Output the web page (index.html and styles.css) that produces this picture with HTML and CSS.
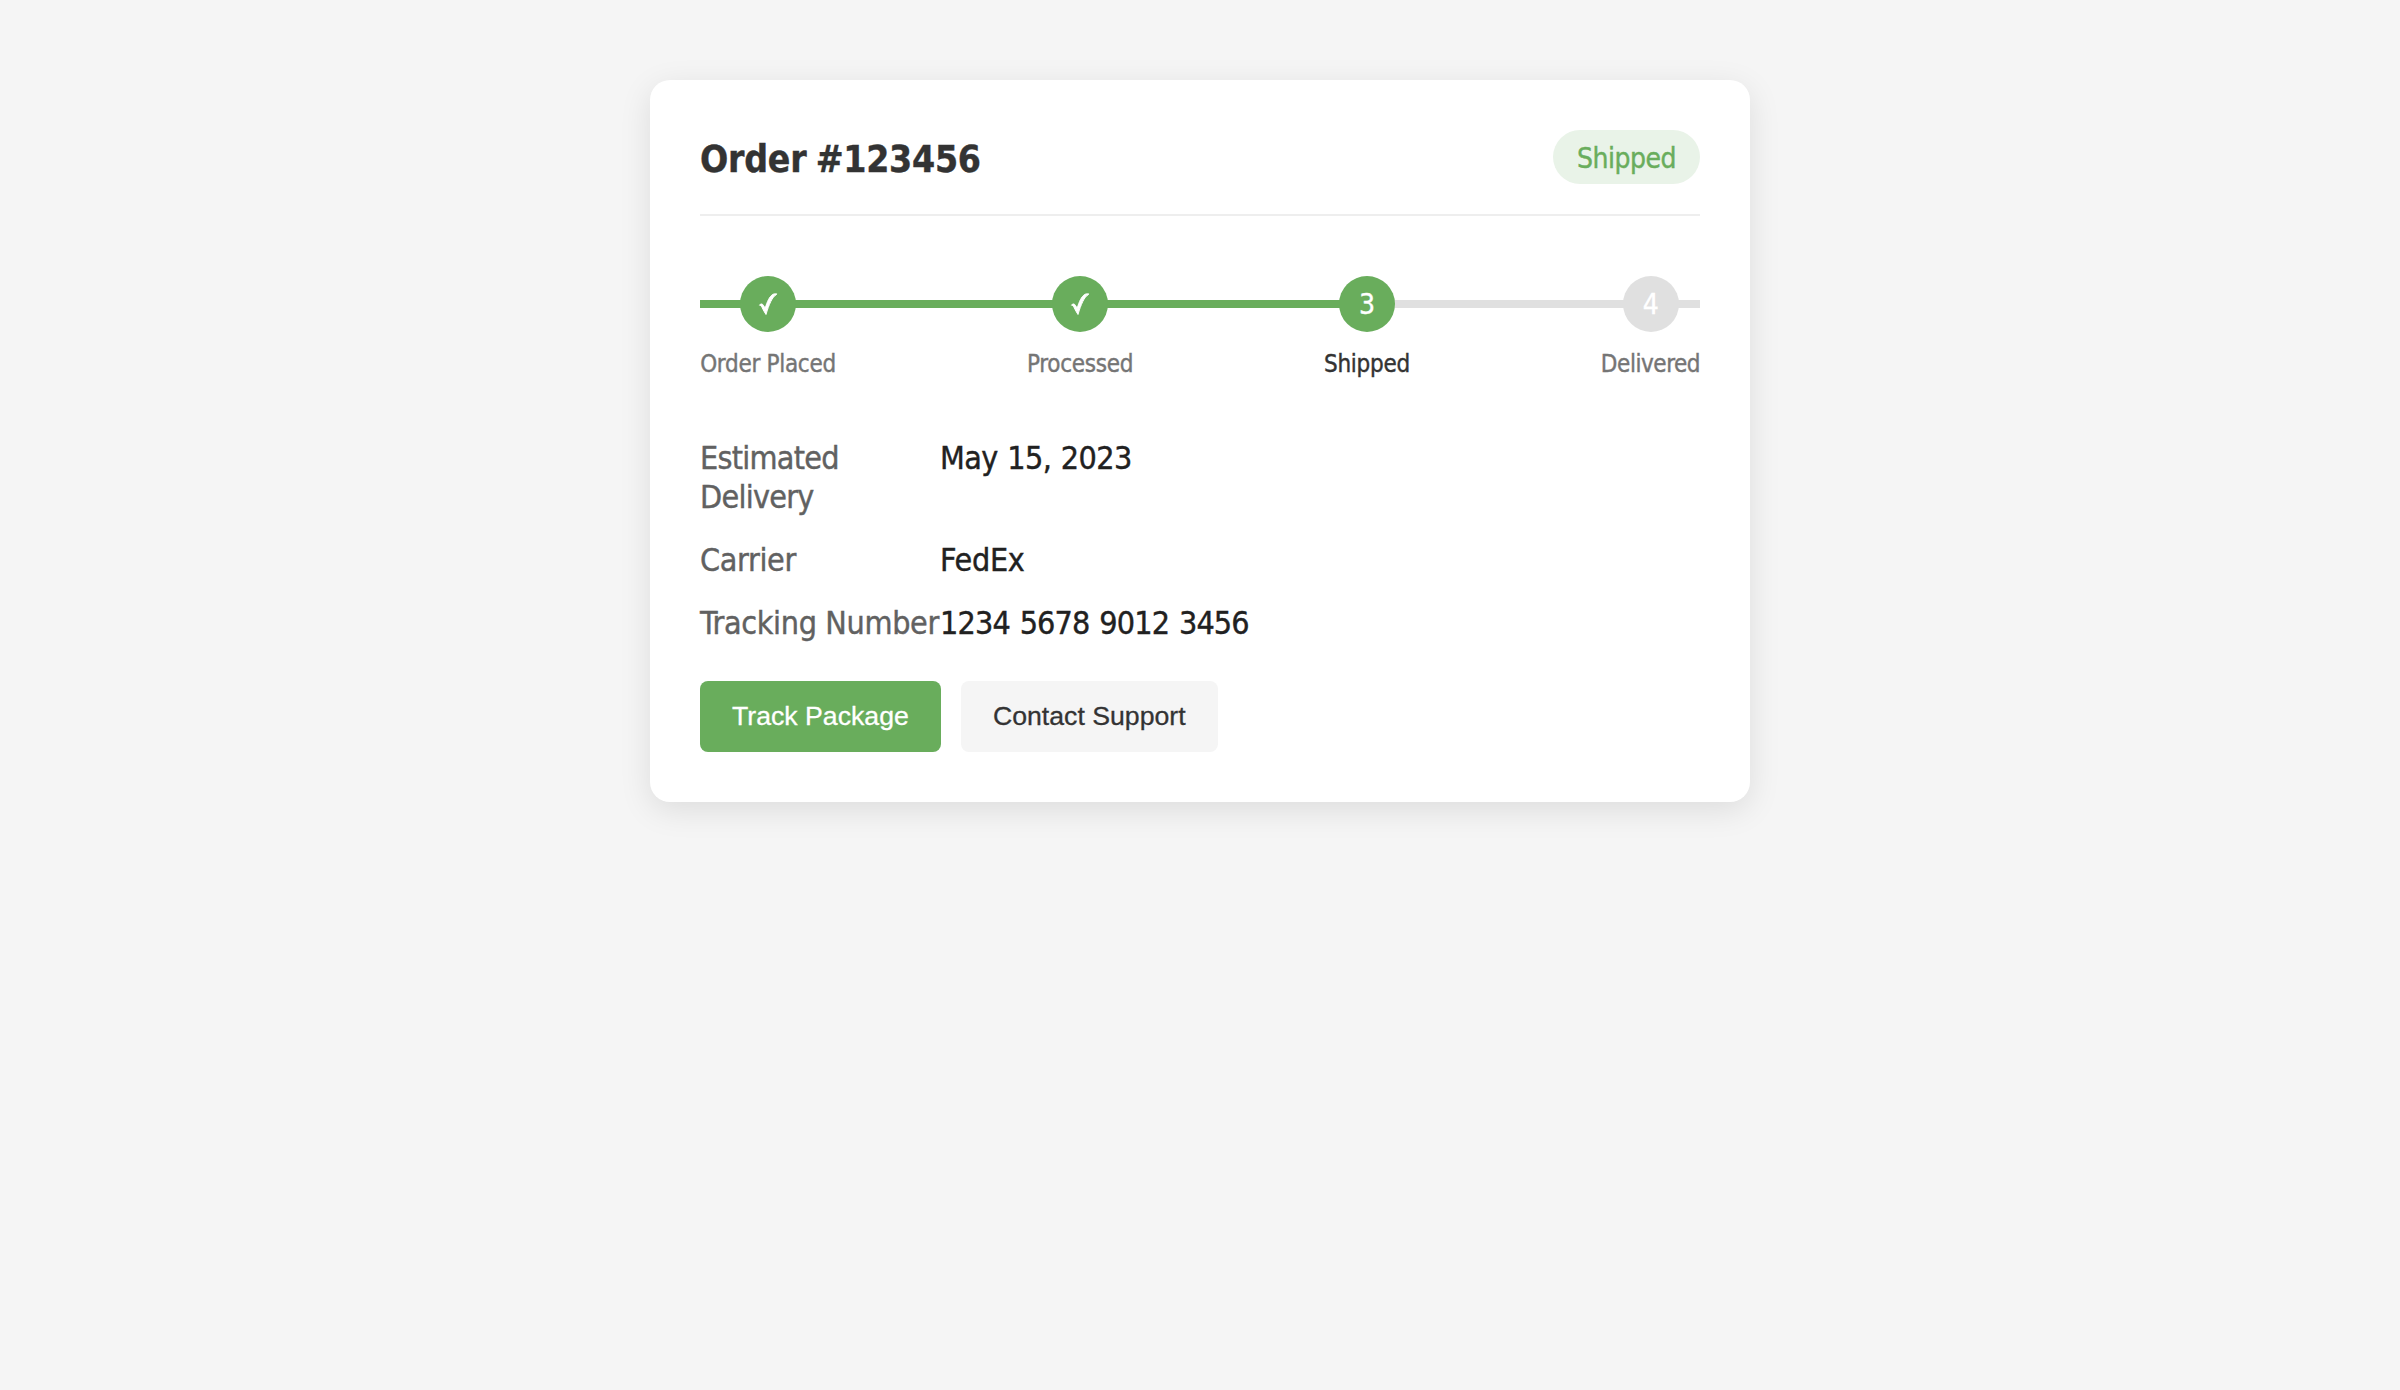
FILE: index.html
```html
<!DOCTYPE html>
<html lang="en">
<head>
<meta charset="utf-8">
<title>Order #123456</title>
<link rel="stylesheet" href="styles.css">
</head>
<body>
<main class="card">
  <header class="card-header">
    <h1 class="order-title">Order #123456</h1>
    <span class="badge">Shipped</span>
  </header>
  <ol class="steps">
    <li class="step placed"><span class="marker done"><svg class="check" viewBox="0 0 20 24" aria-hidden="true"><path d="M1.5 13.2C2.3 11.7 4.3 11.3 5.4 13.3L7.2 16.3C9.2 9.2 11.6 4.8 14.2 2.8C15.5 1.8 17 1.7 18.8 1.9L18.4 2.6C14.3 4.7 10.8 12.8 8 22.5C6.7 20.6 5.2 17.9 4.2 15.7C3.5 14.1 2.5 13.3 1.5 13.2Z"/></svg></span><span class="step-label">Order Placed</span></li>
    <li class="step processed"><span class="marker done"><svg class="check" viewBox="0 0 20 24" aria-hidden="true"><path d="M1.5 13.2C2.3 11.7 4.3 11.3 5.4 13.3L7.2 16.3C9.2 9.2 11.6 4.8 14.2 2.8C15.5 1.8 17 1.7 18.8 1.9L18.4 2.6C14.3 4.7 10.8 12.8 8 22.5C6.7 20.6 5.2 17.9 4.2 15.7C3.5 14.1 2.5 13.3 1.5 13.2Z"/></svg></span><span class="step-label">Processed</span></li>
    <li class="step shipped"><span class="marker digit done">3</span><span class="step-label current">Shipped</span></li>
    <li class="step delivered"><span class="marker digit">4</span><span class="step-label">Delivered</span></li>
  </ol>
  <dl class="details">
    <div class="row"><dt class="name tight">Estimated Delivery</dt><dd class="value">May 15, 2023</dd></div>
    <div class="row"><dt class="name">Carrier</dt><dd class="value plain">FedEx</dd></div>
    <div class="row"><dt class="name">Tracking Number</dt><dd class="value number">1234 5678 9012 3456</dd></div>
  </dl>
  <div class="actions">
    <button class="button primary">Track Package</button>
    <button class="button secondary">Contact Support</button>
  </div>
</main>
</body>
</html>
```
FILE: styles.css
```css
* { box-sizing: border-box; }

body {
  margin: 0;
  padding: 80px 0;
  background: #f5f5f5;
  font-family: "DejaVu Sans Condensed", "DejaVu Sans", sans-serif;
  font-stretch: condensed;
  font-size: 32px;
  line-height: 39px;
  -webkit-text-stroke: 0.4px currentColor;
}

.card {
  width: 1100px;
  height: 722px;
  margin: 0 auto;
  padding: 50px;
  background: #fff;
  border-radius: 20px;
  box-shadow: 0 8px 32px rgba(0, 0, 0, 0.1);
}

.card-header {
  display: flex;
  justify-content: space-between;
  align-items: center;
  height: 86px;
  padding-bottom: 30px;
  border-bottom: 2px solid #eee;
}

.order-title {
  margin: 0;
  padding-top: 5px;
  color: #333;
  font-size: 37px;
  line-height: 44px;
  letter-spacing: -0.25px;
  word-spacing: -2px;
}

.badge {
  width: 147px;
  height: 54px;
  padding-top: 12px;
  border-radius: 27px;
  background: #e9f3e8;
  color: #69ad5c;
  font-size: 28px;
  line-height: 34px;
  letter-spacing: -0.5px;
  text-align: center;
}

.steps {
  display: flex;
  justify-content: space-between;
  height: 101px;
  margin: 60px 0;
  padding: 0;
  list-style: none;
  background:
    linear-gradient(#69ad5c, #69ad5c) 0 24px / 66% 8px no-repeat,
    linear-gradient(#e0e0e0, #e0e0e0) 0 24px / 100% 8px no-repeat;
}

.step {
  display: flex;
  flex-direction: column;
  align-items: center;
  gap: 18px;
}

.placed { width: 136px; letter-spacing: -0.3px; }
.processed { width: 106px; letter-spacing: -0.3px; }
.shipped { width: 86px; letter-spacing: -0.25px; }
.delivered { width: 99px; letter-spacing: -0.45px; }

.marker {
  display: flex;
  flex: none;
  justify-content: center;
  align-items: center;
  width: 56px;
  height: 56px;
  border-radius: 50%;
  background: #e0e0e0;
  color: #fff;
  font-size: 28px;
  line-height: 34px;
}

.digit { padding-top: 2px; }

.done { background: #69ad5c; }

.check {
  width: 20px;
  height: 24px;
  fill: #fff;
  stroke: #fff;
  stroke-width: 1;
}

.step-label {
  color: #757575;
  font-size: 24px;
  line-height: 29px;
  white-space: nowrap;
}

.current { color: #333; }

.details {
  display: flex;
  flex-direction: column;
  gap: 24px;
  margin: 0;
  padding-top: 2px;
}

.row { display: flex; }

.name {
  flex: none;
  width: 240px;
  color: #616161;
  letter-spacing: -0.35px;
  white-space: nowrap;
}

.tight {
  padding-right: 60px;
  letter-spacing: -0.75px;
  white-space: normal;
}

.value {
  margin: 0;
  color: #212121;
  letter-spacing: -0.6px;
  word-spacing: 1px;
}

.plain { letter-spacing: -0.3px; }
.number { letter-spacing: -0.85px; word-spacing: 1.5px; }

.actions {
  display: flex;
  gap: 20px;
  padding-top: 38px;
}

.button {
  height: 71px;
  padding: 0 32px;
  border: 0;
  border-radius: 8px;
  background: #f5f5f5;
  color: #333;
  font: 26.667px "Liberation Sans", Arial, sans-serif;
  -webkit-text-stroke: 0.3px currentColor;
}

.primary {
  background: #69ad5c;
  color: #fff;
}

.secondary { width: 257px; }
```
